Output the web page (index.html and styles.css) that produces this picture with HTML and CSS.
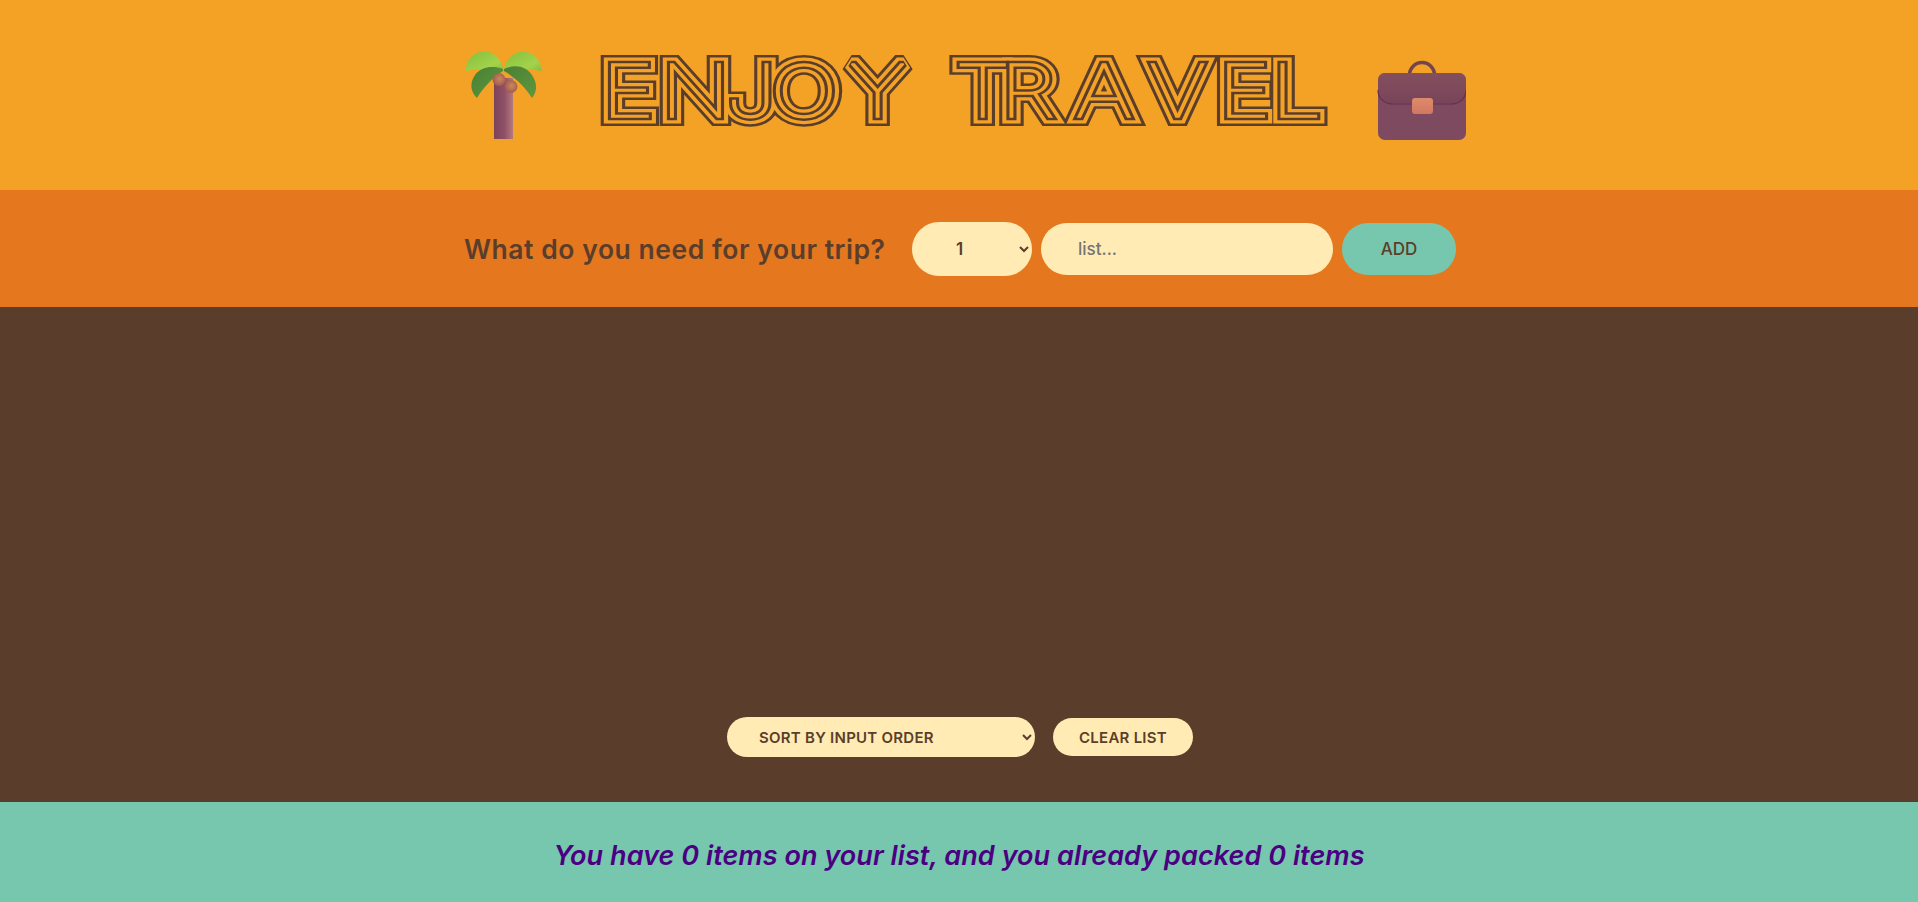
FILE: index.html
```html
<!DOCTYPE html>
<html lang="en">
<head>
<meta charset="utf-8">
<title>Enjoy Travel</title>
<link rel="stylesheet" href="styles.css">
</head>
<body>
<div class="app">
  <h1 class="logo">
    <svg class="emoji" viewBox="452 40 96 110" width="96" height="110" aria-hidden="true">
      <defs>
        <linearGradient id="trunk" x1="0" x2="1" y1="0" y2="0"><stop offset="0" stop-color="#7c4459"/><stop offset=".55" stop-color="#8f5068"/><stop offset="1" stop-color="#b57a7d"/></linearGradient>
        <linearGradient id="leafTop" x1="0" x2="1" y1="0" y2="1"><stop offset="0" stop-color="#84bf3c"/><stop offset=".7" stop-color="#a4d24c"/><stop offset="1" stop-color="#86bd40"/></linearGradient>
        <linearGradient id="leafLow" x1="0" x2="1" y1="0" y2="1"><stop offset="0" stop-color="#4a7f35"/><stop offset="1" stop-color="#5f983d"/></linearGradient>
        <radialGradient id="nut" cx=".55" cy=".45" r=".6"><stop offset="0" stop-color="#c88a5f"/><stop offset="1" stop-color="#a0544c"/></radialGradient>
      </defs>
      <rect x="494" y="78" width="19" height="61" fill="url(#trunk)"/>
      <path d="M465.500 71C466 59 475 51 485 51.500C495 52 502 60 503.500 71C491 68 478 69 465.500 71Z" fill="url(#leafTop)"/>
      <path d="M504 71C505 60 513 52 523 51.500C533 51.500 541 60 542 71C529 69 516 68 504 71Z" fill="url(#leafTop)"/>
      <path d="M503 69C492 65 481 67 475 75C469 84 471 92 477 98C483 88 492 78 503 71Z" fill="url(#leafLow)"/>
      <path d="M504 69C515 64 526 66 532 75C538 84 537 92 532 98C526 88 516 78 504 71Z" fill="url(#leafLow)"/>
      <circle cx="499" cy="79.500" r="6.500" fill="url(#nut)"/>
      <circle cx="511" cy="86.500" r="6.500" fill="url(#nut)"/>
    </svg>
    <svg class="title" viewBox="548 40 822 110" width="822" height="110" role="img" aria-label="Enjoy Travel">
      <g transform="scale(1.25 1)">
        <g class="ink ring-a"><use href="#title-text"/></g>
        <g class="ink ring-b"><use href="#title-text"/></g>
        <g class="ink ring-c"><use href="#title-text"/></g>
        <g class="ink ring-d"><text id="title-text" class="title-text" x="481.500 528.700 580.800 616.200 679 760 764 800.200 860.200 919 974.500 1017" y="116.750">ENJOY TRAVEL</text></g>
      </g>
    </svg>
    <svg class="emoji" viewBox="1370 40 96 110" width="96" height="110" aria-hidden="true">
      <defs>
        <linearGradient id="flap" x1="0" x2="0" y1="0" y2="1"><stop offset="0" stop-color="#84505f"/><stop offset="1" stop-color="#784458"/></linearGradient>
        <linearGradient id="clasp" x1="0" x2="0" y1="0" y2="1"><stop offset="0" stop-color="#dd8a6c"/><stop offset="1" stop-color="#d3775f"/></linearGradient>
      </defs>
      <path d="M1409.500 75a12.500 12.500 0 0 1 25 0" fill="none" stroke="#75454f" stroke-width="3.500"/>
      <rect x="1378" y="73" width="88" height="67" rx="7" fill="#7d4a60"/>
      <path d="M1378 80a7 7 0 0 1 7-7h74a7 7 0 0 1 7 7v8c0 9-6 15-15 15h-58c-9 0-15-6-15-15Z" fill="url(#flap)"/>
      <path d="M1378 90c0 8 6 14 15 14h58c9 0 15-6 15-14" fill="none" stroke="#6a2d57" stroke-width="1.200"/>
      <rect x="1412" y="98" width="21" height="16" rx="3" fill="url(#clasp)"/>
    </svg>
  </h1>
  <form class="add-form">
    <h3 class="prompt">What do you need for your trip?</h3>
    <select class="control qty"><option>1</option></select>
    <input class="control item" type="text" placeholder="list...">
    <button class="control add" type="button">ADD</button>
  </form>
  <main class="list">
    <div class="actions">
      <select class="small sort"><option>SORT BY INPUT ORDER</option></select>
      <button class="small clear" type="button">CLEAR LIST</button>
    </div>
  </main>
  <footer class="stats"><em>You have 0 items on your list, and you already packed 0 items</em></footer>
</div>
</body>
</html>
```
FILE: styles.css
```css
* { margin: 0; padding: 0; box-sizing: border-box; }
html, body { height: 100%; }
body {
  font-family: Inter, "Noto Sans", sans-serif;
  color: #5a3e2b;
  background: #5a3e2b;
}
.app {
  height: 100vh;
  display: grid;
  grid-template-rows: 190px 117px 1fr 100px;
}
.logo {
  background: #f4a226;
  display: flex;
  align-items: center;
  justify-content: center;
}
.emoji, .title { display: block; flex: none; }
.title-text {
  font-family: Inter, sans-serif;
  font-weight: 100;
  font-size: 72px;
}
.ink { stroke-linejoin: miter; stroke-miterlimit: 2; }
.ring-a { fill: #5a3e2b; stroke: #5a3e2b; stroke-width: 18px; }
.ring-b { fill: #f4a226; stroke: #f4a226; stroke-width: 13px; }
.ring-c { fill: #5a3e2b; stroke: #5a3e2b; stroke-width: 6.5px; }
.ring-d { fill: #f4a226; stroke: #f4a226; stroke-width: 1.5px; }
.add-form {
  background: #e5771f;
  display: flex;
  align-items: center;
  justify-content: center;
  gap: 9px;
  padding-left: 2px;
}
.prompt {
  font-size: 26.5px;
  font-weight: 600;
  letter-spacing: 0.55px;
  width: 421px;
  margin-right: 18px;
  white-space: nowrap;
}
.control {
  font-family: inherit;
  font-size: 17px;
  font-weight: 600;
  color: #5a3e2b;
  background: #ffebb3;
  border: none;
  border-radius: 100px;
  height: 52px;
}
.qty { width: 120px; height: 54px; padding: 0 0 0 40px; }
.item { width: 292px; padding: 0 37px; font-weight: 500; }
.add { width: 114px; background: #76c7ad; font-weight: 500; }
.list {
  display: flex;
  flex-direction: column;
  justify-content: flex-end;
  align-items: center;
  padding-bottom: 45px;
  padding-left: 2px;
}
.actions { display: flex; align-items: center; gap: 18px; }
.small {
  font-family: inherit;
  font-size: 15px;
  font-weight: 600;
  letter-spacing: 0.25px;
  color: #5a3e2b;
  background: #ffebb3;
  border: none;
  border-radius: 100px;
}
.sort { width: 308px; height: 40px; padding: 0 28px; }
.clear { width: 140px; height: 38px; }
.stats {
  background: #76c7ad;
  color: #4b0082;
  display: flex;
  align-items: center;
  justify-content: center;
  font-size: 27px;
  font-weight: 600;
  letter-spacing: 0.06px;
  padding-top: 6px;
}
```
